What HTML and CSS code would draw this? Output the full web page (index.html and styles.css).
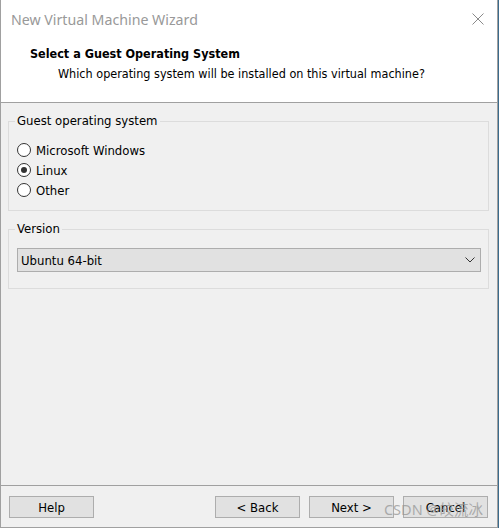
FILE: index.html
```html
<!DOCTYPE html>
<html>
<head>
<meta charset="utf-8">
<link rel="stylesheet" href="styles.css">
</head>
<body>
<div class="window">
  <div class="header">
    <div class="titlebar">
      <span class="title">New Virtual Machine Wizard</span>
      <svg class="close" width="12" height="12" viewBox="0 0 12 12"><path d="M0.5 0.5 L11.5 11.5 M11.5 0.5 L0.5 11.5" stroke="#8a8a8a" stroke-width="1" fill="none"/></svg>
    </div>
    <div class="heading">
      <div class="h-title">Select a Guest Operating System</div>
      <div class="h-sub">Which operating system will be installed on this virtual machine?</div>
    </div>
  </div>
  <div class="content">
    <fieldset class="group group-os">
      <legend>Guest operating system</legend>
      <label class="radio"><span class="circle"></span>Microsoft Windows</label>
      <label class="radio"><span class="circle checked"></span>Linux</label>
      <label class="radio"><span class="circle"></span>Other</label>
    </fieldset>
    <fieldset class="group group-version">
      <legend>Version</legend>
      <div class="select">
        <span>Ubuntu 64-bit</span>
        <svg width="10" height="6" viewBox="0 0 10 6"><path d="M0.5 0.5 L5 5 L9.5 0.5" stroke="#333" stroke-width="1" fill="none"/></svg>
      </div>
    </fieldset>
  </div>
  <div class="footer">
    <button class="btn">Help</button>
    <div class="spacer"></div>
    <button class="btn">&lt; Back</button>
    <button class="btn">Next &gt;</button>
    <button class="btn">Cancel</button>
  </div>
  <div class="watermark">CSDN @皎流冰</div>
</div>
</body>
</html>
```
FILE: styles.css
```css
html, body {
  margin: 0;
  padding: 0;
  background: #3b6b8c;
}
body {
  width: 499px;
  height: 528px;
  overflow: hidden;
}
.window {
  position: relative;
  width: 498px;
  height: 528px;
  box-sizing: border-box;
  border: 1px solid #a0a0a0;
  border-top: none;
  background: #f0f0f0;
  display: flex;
  flex-direction: column;
  font-family: "DejaVu Sans Condensed", "DejaVu Sans", sans-serif;
  font-size: 13px;
  color: #000;
}
.header {
  background: #fff;
  height: 102px;
  border-bottom: 1px solid #a0a0a0;
  flex: none;
}
.titlebar {
  height: 38px;
  display: flex;
  align-items: center;
  justify-content: space-between;
  padding: 0 13px 0 10px;
}
.title {
  font-family: "Noto Sans", "Open Sans", sans-serif;
  font-size: 14.2px;
  color: #999;
}
.close {
  display: block;
}
.heading {
  margin-top: 6px;
  padding-left: 29px;
  font-size: 12.5px;
}
.h-title {
  font-weight: bold;
  line-height: 20px;
}
.h-sub {
  line-height: 20px;
  padding-left: 28px;
}
.content {
  flex: 1;
  padding-top: 10px;
}
.group {
  margin: 0 8px 0 7px;
  border: 1px solid #dcdcdc;
  padding: 0 7px 0 8px;
  min-width: 0;
}
.group legend {
  padding: 0 2px;
  margin-left: -2px;
  line-height: 16px;
}
.group-os {
  padding-top: 11px;
  padding-bottom: 10px;
}
.group-version {
  margin-top: 10px;
  padding-top: 11px;
  padding-bottom: 16px;
}
.radio {
  display: flex;
  align-items: center;
  height: 20px;
  gap: 5px;
}
.circle {
  width: 12px;
  height: 12px;
  border: 1px solid #333;
  border-radius: 50%;
  background: #fff;
  position: relative;
  flex: none;
}
.circle.checked::after {
  content: "";
  position: absolute;
  left: 3px;
  top: 3px;
  width: 6px;
  height: 6px;
  border-radius: 50%;
  background: #333;
}
.select {
  height: 24px;
  box-sizing: border-box;
  border: 1px solid #adadad;
  background: #e1e1e1;
  display: flex;
  align-items: center;
  justify-content: space-between;
  padding: 0 5px 0 3px;
}
.select svg {
  display: block;
}
.footer {
  flex: none;
  border-top: 1px solid #a0a0a0;
  padding: 10px 9px 9px 8px;
  display: flex;
  gap: 9px;
}
.spacer {
  flex: 1;
}
.btn {
  width: 85px;
  height: 22px;
  margin: 0;
  padding: 0;
  border: 1px solid #adadad;
  background: #e1e1e1;
  font-family: inherit;
  font-size: 13px;
  color: #000;
}
.watermark {
  position: absolute;
  right: 14px;
  bottom: 8px;
  font-family: "Noto Sans", "Noto Sans CJK SC", sans-serif;
  font-size: 14.5px;
  color: rgba(150, 150, 150, 0.75);
  pointer-events: none;
}
```
